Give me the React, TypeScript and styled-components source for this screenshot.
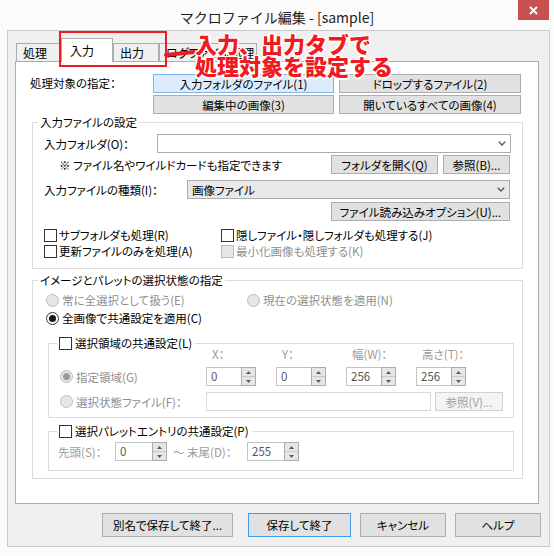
import React from 'react'
import styled, { createGlobalStyle } from 'styled-components'

const GlobalStyle = createGlobalStyle`
  html, body {
    margin: 0;
    padding: 0;
    background: #ffffff;
  }
  body {
    font-family: "Noto Sans CJK JP", "Noto Sans", sans-serif;
    font-size: 11.5px;
    font-feature-settings: "palt";
    color: #000000;
  }
  * {
    box-sizing: border-box;
  }
`

const Frame = styled.div`
  position: relative;
  width: 554px;
  height: 556px;
  background: #fbfbfb;
  overflow: hidden;
`

const TitleBar = styled.div`
  display: grid;
  grid-template-columns: 1fr auto 1fr;
  align-items: start;
  height: 30px;
`

const Title = styled.div`
  grid-column: 2;
  padding-top: 7px;
  font-size: 14px;
  line-height: 20px;
  font-feature-settings: normal;
  color: #222222;
`

const CloseButton = styled.div`
  grid-column: 3;
  justify-self: end;
  width: 31px;
  height: 20px;
  margin-right: 5px;
  background: #c75050;
  display: flex;
  align-items: center;
  justify-content: center;
`

const Client = styled.div`
  margin-left: 7px;
  width: 543px;
  height: 517px;
  background: #f0f0f0;
  border: 1px solid #c9c9c9;
  padding: 7px 7px 0 7px;
`

const TabStrip = styled.div`
  position: relative;
  z-index: 2;
  display: flex;
  align-items: flex-end;
  height: 23px;
  padding-left: 1px;
`

const Tab = styled.div<{ $w: number; $active?: boolean }>`
  width: ${(p) => p.$w}px;
  height: ${(p) => (p.$active ? 24 : 18)}px;
  margin-bottom: ${(p) => (p.$active ? -1 : 0)}px;
  padding-left: ${(p) => (p.$active ? 8 : 6)}px;
  display: flex;
  align-items: center;
  border: 1px solid #acacac;
  border-bottom: none;
  background: ${(p) => (p.$active ? '#ffffff' : '#f0f0f0')};
  font-size: 12px;
  white-space: nowrap;
  overflow: hidden;
`

const Panel = styled.div`
  position: relative;
  z-index: 1;
  width: 524px;
  height: 443px;
  background: #ffffff;
  border: 1px solid #acacac;
  padding-top: 12px;
`

const TargetRow = styled.div`
  display: flex;
  align-items: flex-start;
  padding-left: 14px;
`

const TargetLabel = styled.div`
  width: 123px;
  line-height: 19px;
`

const TargetGrid = styled.div`
  display: grid;
  grid-template-columns: 181px 182px;
  gap: 2px 5px;
`

const Button = styled.div<{ $w?: number; $h?: number; $active?: boolean; $primary?: boolean; $disabled?: boolean }>`
  width: ${(p) => (p.$w ? `${p.$w}px` : 'auto')};
  height: ${(p) => p.$h ?? 19}px;
  flex: none;
  display: flex;
  align-items: center;
  justify-content: center;
  white-space: nowrap;
  background: ${(p) => (p.$active ? '#dcecfc' : p.$disabled ? '#f4f4f4' : '#e1e1e1')};
  border: 1px solid
    ${(p) => (p.$active ? '#7eb4ea' : p.$primary ? '#3c9cf0' : p.$disabled ? '#d2d2d2' : '#adadad')};
  color: ${(p) => (p.$disabled ? '#a0a0a0' : '#000000')};
`

const Group = styled.fieldset`
  margin: 0;
  padding: 0;
  min-width: 0;
  border: 1px solid #dcdcdc;
`

const InputGroup = styled(Group)`
  width: 491px;
  margin: 1px 0 0 16px;
  padding: 5px 0 9px 0;
`

const SelectionGroup = styled(Group)`
  width: 491px;
  margin: 4px 0 0 16px;
  padding: 5px 0 7px 0;
`

const SubGroup = styled(Group)<{ $mt: number; $pb: number }>`
  width: 466px;
  margin: ${(p) => p.$mt}px 0 0 15px;
  padding: 0 0 ${(p) => p.$pb}px 0;
`

const Legend = styled.legend`
  margin-left: 5px;
  padding: 0 2px;
  height: 14px;
  line-height: 14px;
`

const CheckLegend = styled.legend`
  margin-left: 8px;
  padding: 0 3px 0 2px;
  height: 16px;
  display: flex;
  align-items: center;
  gap: 3px;
  line-height: 16px;
`

const FieldRow = styled.div<{ $mt?: number }>`
  display: flex;
  align-items: center;
  height: 19px;
  margin-top: ${(p) => p.$mt ?? 0}px;
  padding-left: 11px;
`

const FieldLabel = styled.div<{ $w: number }>`
  width: ${(p) => p.$w}px;
  flex: none;
`

const Combo = styled.div<{ $w: number; $list?: boolean }>`
  width: ${(p) => p.$w}px;
  height: 19px;
  display: flex;
  align-items: center;
  justify-content: space-between;
  padding: 0 4px 0 4px;
  background: ${(p) => (p.$list ? '#e8e8e8' : '#ffffff')};
  border: 1px solid ${(p) => (p.$list ? '#acacac' : '#abadb3')};
`

const NoteRow = styled.div`
  display: flex;
  align-items: center;
  height: 19px;
  margin-top: 2px;
  padding: 0 12px 0 26px;
  gap: 5px;
`

const Note = styled.div`
  flex: 1;
`

const RightRow = styled.div<{ $mt: number }>`
  display: flex;
  justify-content: flex-end;
  margin-top: ${(p) => p.$mt}px;
  padding-right: 12px;
`

const CheckGrid = styled.div`
  display: grid;
  grid-template-columns: 177px auto;
  grid-auto-rows: 16px;
  margin-top: 6px;
  padding-left: 11px;
`

const Choice = styled.label<{ $disabled?: boolean; $w?: number }>`
  display: flex;
  align-items: center;
  gap: 2px;
  flex: none;
  width: ${(p) => (p.$w ? `${p.$w}px` : 'auto')};
  white-space: nowrap;
  color: ${(p) => (p.$disabled ? '#8f8f8f' : '#000000')};
`

const CheckBox = styled.span<{ $disabled?: boolean }>`
  flex: none;
  width: 13px;
  height: 13px;
  border: 1px solid ${(p) => (p.$disabled ? '#bcbcbc' : '#333333')};
  background: ${(p) => (p.$disabled ? '#e6e6e6' : '#ffffff')};
`

const RadioMark = styled.span<{ $checked?: boolean; $disabled?: boolean }>`
  flex: none;
  width: 13px;
  height: 13px;
  margin-right: 1px;
  border-radius: 50%;
  border: 1px solid ${(p) => (p.$disabled ? '#bcbcbc' : '#333333')};
  background: ${(p) => (p.$disabled ? '#e6e6e6' : '#ffffff')};
  display: flex;
  align-items: center;
  justify-content: center;
  &::after {
    content: '';
    display: ${(p) => (p.$checked ? 'block' : 'none')};
    width: 7px;
    height: 7px;
    border-radius: 50%;
    background: ${(p) => (p.$disabled ? '#9a9a9a' : '#1a1a1a')};
  }
`

const RadioGrid = styled.div`
  display: grid;
  grid-template-columns: 201px auto;
  grid-auto-rows: 16px;
  row-gap: 2px;
  padding-left: 13px;
`

const AxisRow = styled.div`
  display: grid;
  grid-template-columns: repeat(4, 70px);
  height: 13px;
  margin-top: -3px;
  padding-left: 157px;
  line-height: 13px;
  color: #9a9a9a;
`

const AxisLabel = styled.div`
  padding-left: 6px;
`

const AreaRow = styled.div`
  display: flex;
  align-items: center;
  height: 19px;
  margin-top: 6px;
  padding-left: 11px;
`

const Spin = styled.div<{ $w: number; $mr?: number }>`
  display: flex;
  width: ${(p) => p.$w}px;
  height: 19px;
  flex: none;
  margin-right: ${(p) => p.$mr ?? 0}px;
`

const SpinValue = styled.div`
  flex: 1;
  padding-left: 4px;
  line-height: 17px;
  color: #555555;
  background: #ffffff;
  border: 1px solid #c4c4c4;
  border-right: none;
`

const SpinButtons = styled.div`
  width: 15px;
  display: flex;
  flex-direction: column;
  background: #e6e6e6;
  border: 1px solid #adadad;
`

const SpinHalf = styled.div<{ $top?: boolean }>`
  flex: 1;
  display: flex;
  align-items: center;
  justify-content: center;
  border-bottom: ${(p) => (p.$top ? '1px solid #c9c9c9' : 'none')};
`

const TextBox = styled.div<{ $w: number }>`
  width: ${(p) => p.$w}px;
  height: 19px;
  margin-right: 4px;
  flex: none;
  background: #ffffff;
  border: 1px solid #d9d9d9;
`

const PaletteRow = styled.div`
  display: flex;
  align-items: center;
  height: 19px;
  margin-top: 3px;
  padding-left: 9px;
  color: #9a9a9a;
`

const PaletteLabel = styled.div<{ $w: number; $pl?: number }>`
  width: ${(p) => p.$w}px;
  padding-left: ${(p) => p.$pl ?? 0}px;
  white-space: nowrap;
`

const Footer = styled.div`
  display: flex;
  justify-content: flex-end;
  gap: 9px;
  margin-top: 9px;
  padding-right: 1px;
`

const FooterButton = styled(Button)<{ $gapAfter?: boolean }>`
  margin-right: ${(p) => (p.$gapAfter ? 6 : 0)}px;
`

const RedFrame = styled.div`
  position: absolute;
  left: 59px;
  top: 31px;
  width: 108px;
  height: 36px;
  border: 2px solid #ec1c24;
  z-index: 5;
`

const Dash = styled.svg`
  position: absolute;
  left: 164px;
  top: 46px;
  z-index: 5;
`

const Callout = styled.div`
  position: absolute;
  left: 195px;
  top: 32px;
  z-index: 6;
  font-size: 22px;
  font-weight: 900;
  line-height: 22px;
  color: #f01a22;
  font-feature-settings: normal;
  white-space: nowrap;
  text-shadow:
    1.5px 0 0 #fff, -1.5px 0 0 #fff, 0 1.5px 0 #fff, 0 -1.5px 0 #fff,
    1px 1px 0 #fff, -1px 1px 0 #fff, 1px -1px 0 #fff, -1px -1px 0 #fff;
`

const Chevron = () => (
  <svg width="8" height="5" viewBox="0 0 8 5">
    <polyline points="0.8,0.8 4,4 7.2,0.8" fill="none" stroke="#555" strokeWidth="1.3" />
  </svg>
)

const Arrow = ({ up }: { up?: boolean }) => (
  <svg width="5" height="3" viewBox="0 0 5 3">
    <polygon points={up ? '0,3 2.5,0 5,3' : '0,0 5,0 2.5,3'} fill="#5a5a5a" />
  </svg>
)

const SpinBox = ({ w, value, mr }: { w: number; value: string; mr?: number }) => (
  <Spin $w={w} $mr={mr}>
    <SpinValue>{value}</SpinValue>
    <SpinButtons>
      <SpinHalf $top>
        <Arrow up />
      </SpinHalf>
      <SpinHalf>
        <Arrow />
      </SpinHalf>
    </SpinButtons>
  </Spin>
)

const Check = ({ label, disabled }: { label: string; disabled?: boolean }) => (
  <Choice $disabled={disabled}>
    <CheckBox $disabled={disabled} />
    {label}
  </Choice>
)

const Radio = ({ label, checked, disabled, w }: { label: string; checked?: boolean; disabled?: boolean; w?: number }) => (
  <Choice $disabled={disabled} $w={w}>
    <RadioMark $checked={checked} $disabled={disabled} />
    {label}
  </Choice>
)

export default function App() {
  return (
    <>
      <GlobalStyle />
      <Frame>
        <TitleBar>
          <Title>マクロファイル編集 - [sample]</Title>
          <CloseButton>
            <svg width="9" height="9" viewBox="0 0 9 9">
              <path d="M1 1 L8 8 M8 1 L1 8" stroke="#fff" strokeWidth="2" />
            </svg>
          </CloseButton>
        </TitleBar>

        <Client>
          <TabStrip>
            <Tab $w={45}>処理</Tab>
            <Tab $w={52} $active>入力</Tab>
            <Tab $w={46}>出力</Tab>
            <Tab $w={98}>ログファイル処理</Tab>
          </TabStrip>

          <Panel>
            <TargetRow>
              <TargetLabel>処理対象の指定：</TargetLabel>
              <TargetGrid>
                <Button $active>入力フォルダのファイル(1)</Button>
                <Button>ドロップするファイル(2)</Button>
                <Button>編集中の画像(3)</Button>
                <Button>開いているすべての画像(4)</Button>
              </TargetGrid>
            </TargetRow>

            <InputGroup>
              <Legend>入力ファイルの設定</Legend>
              <FieldRow>
                <FieldLabel $w={113}>入力フォルダ(O)：</FieldLabel>
                <Combo $w={354}>
                  <span />
                  <Chevron />
                </Combo>
              </FieldRow>
              <NoteRow>
                <Note>※ ファイル名やワイルドカードも指定できます</Note>
                <Button $w={107}>フォルダを開く(Q)</Button>
                <Button $w={67}>参照(B)...</Button>
              </NoteRow>
              <FieldRow $mt={6}>
                <FieldLabel $w={143}>入力ファイルの種類(I)：</FieldLabel>
                <Combo $w={323} $list>
                  <span>画像ファイル</span>
                  <Chevron />
                </Combo>
              </FieldRow>
              <RightRow $mt={3}>
                <Button $w={179}>ファイル読み込みオプション(U)...</Button>
              </RightRow>
              <CheckGrid>
                <Check label="サブフォルダも処理(R)" />
                <Check label="隠しファイル・隠しフォルダも処理する(J)" />
                <Check label="更新ファイルのみを処理(A)" />
                <Check label="最小化画像も処理する(K)" disabled />
              </CheckGrid>
            </InputGroup>

            <SelectionGroup>
              <Legend>イメージとパレットの選択状態の指定</Legend>
              <RadioGrid>
                <Radio label="常に全選択として扱う(E)" disabled />
                <Radio label="現在の選択状態を適用(N)" disabled />
                <Radio label="全画像で共通設定を適用(C)" checked />
              </RadioGrid>

              <SubGroup $mt={9} $pb={6}>
                <CheckLegend>
                  <CheckBox />
                  選択領域の共通設定(L)
                </CheckLegend>
                <AxisRow>
                  <AxisLabel>X：</AxisLabel>
                  <AxisLabel>Y：</AxisLabel>
                  <AxisLabel>幅(W)：</AxisLabel>
                  <AxisLabel>高さ(T)：</AxisLabel>
                </AxisRow>
                <AreaRow>
                  <Radio label="指定領域(G)" checked disabled w={146} />
                  <SpinBox w={50} value="0" mr={20} />
                  <SpinBox w={50} value="0" mr={20} />
                  <SpinBox w={50} value="256" mr={20} />
                  <SpinBox w={50} value="256" />
                </AreaRow>
                <AreaRow>
                  <Radio label="選択状態ファイル(F)：" disabled w={146} />
                  <TextBox $w={225} />
                  <Button $w={68} $disabled>
                    参照(V)...
                  </Button>
                </AreaRow>
              </SubGroup>

              <SubGroup $mt={5} $pb={9}>
                <CheckLegend>
                  <CheckBox />
                  選択パレットエントリの共通設定(P)
                </CheckLegend>
                <PaletteRow>
                  <PaletteLabel $w={57}>先頭(S)：</PaletteLabel>
                  <SpinBox w={52} value="0" />
                  <PaletteLabel $w={80} $pl={6}>〜 末尾(D)：</PaletteLabel>
                  <SpinBox w={52} value="255" />
                </PaletteRow>
              </SubGroup>
            </SelectionGroup>
          </Panel>

          <Footer>
            <FooterButton $w={131} $h={24} $gapAfter>
              別名で保存して終了...
            </FooterButton>
            <FooterButton $w={103} $h={24} $primary>
              保存して終了
            </FooterButton>
            <FooterButton $w={86} $h={24}>
              キャンセル
            </FooterButton>
            <FooterButton $w={86} $h={24}>
              ヘルプ
            </FooterButton>
          </Footer>
        </Client>

        <RedFrame />
        <Dash width="32" height="14" viewBox="0 0 32 14">
          <line x1="2" y1="9" x2="30" y2="6" stroke="#ec1c24" strokeWidth="4" strokeLinecap="round" />
        </Dash>
        <Callout>
          入力、出力タブで
          <br />
          処理対象を設定する
        </Callout>
      </Frame>
    </>
  )
}
